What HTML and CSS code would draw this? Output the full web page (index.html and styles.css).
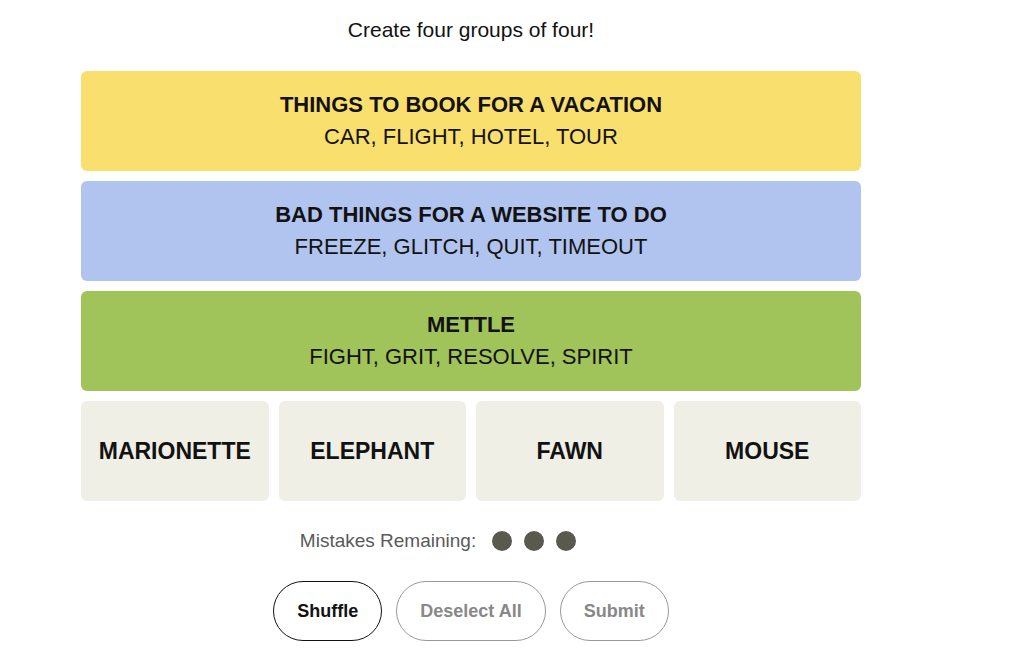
FILE: index.html
```html
<!DOCTYPE html>
<html lang="en">
<head>
    <meta charset="UTF-8">
    <meta name="viewport" content="width=device-width, initial-scale=1.0">
    <title>Connections</title>
    <link rel="stylesheet" href="styles.css">
</head>
<body>
    <div class="game">
        <p class="intro">Create four groups of four!</p>
        <div class="board">
            <div class="solved yellow">
                <h3 class="solved-title">THINGS TO BOOK FOR A VACATION</h3>
                <p class="solved-words">CAR, FLIGHT, HOTEL, TOUR</p>
            </div>
            <div class="solved blue">
                <h3 class="solved-title">BAD THINGS FOR A WEBSITE TO DO</h3>
                <p class="solved-words">FREEZE, GLITCH, QUIT, TIMEOUT</p>
            </div>
            <div class="solved green">
                <h3 class="solved-title">METTLE</h3>
                <p class="solved-words">FIGHT, GRIT, RESOLVE, SPIRIT</p>
            </div>
            <div class="tiles">
                <div class="tile">MARIONETTE</div>
                <div class="tile">ELEPHANT</div>
                <div class="tile">FAWN</div>
                <div class="tile">MOUSE</div>
            </div>
        </div>
        <div class="mistakes">
            <span class="mistakes-label">Mistakes Remaining:</span>
            <span class="dot"></span>
            <span class="dot"></span>
            <span class="dot"></span>
        </div>
        <div class="controls">
            <button class="btn active">Shuffle</button>
            <button class="btn" disabled>Deselect All</button>
            <button class="btn" disabled>Submit</button>
        </div>
    </div>
</body>
</html>
```

FILE: styles.css
```css
body {
    margin: 0;
    background: #fff;
    color: #121212;
    font-family: "Liberation Sans", Arial, sans-serif;
}
.game {
    width: 780px;
    margin-left: 81px;
    padding-top: 16px;
}
.intro {
    margin: 0 0 27px;
    text-align: center;
    font-size: 21px;
    line-height: 28px;
}
.board {
    display: flex;
    flex-direction: column;
    gap: 10px;
}
.solved {
    height: 100px;
    border-radius: 6px;
    display: flex;
    flex-direction: column;
    justify-content: center;
    align-items: center;
    text-align: center;
}
.yellow { background: #f9df6d; }
.blue { background: #b0c4ef; }
.green { background: #a0c35a; }
.solved-title {
    margin: 0 0 2px;
    font-size: 22px;
    line-height: 29px;
    font-weight: bold;
}
.solved-words {
    margin: 0;
    font-size: 22px;
    line-height: 31px;
}
.tiles {
    display: grid;
    grid-template-columns: repeat(4, 1fr);
    gap: 10px;
}
.tile {
    height: 100px;
    border-radius: 6px;
    background: #efefe6;
    display: flex;
    align-items: center;
    justify-content: center;
    font-size: 23px;
    font-weight: bold;
}
.mistakes {
    display: flex;
    align-items: center;
    justify-content: center;
    margin-top: 29px;
    padding-right: 60px;
    height: 22px;
    color: #5a5a5a;
    font-size: 19px;
}
.mistakes-label {
    margin-right: 10px;
}
.dot {
    width: 20px;
    height: 20px;
    border-radius: 50%;
    background: #5a594e;
    margin: 0 6px;
}
.controls {
    display: flex;
    justify-content: center;
    gap: 14px;
    margin-top: 29px;
}
.btn {
    height: 60px;
    padding: 0 23px;
    border-radius: 32px;
    border: 1px solid #999;
    background: #fff;
    color: #888;
    font-family: inherit;
    font-size: 18px;
    font-weight: bold;
}
.btn.active {
    border-color: #121212;
    color: #121212;
    cursor: pointer;
}
```
